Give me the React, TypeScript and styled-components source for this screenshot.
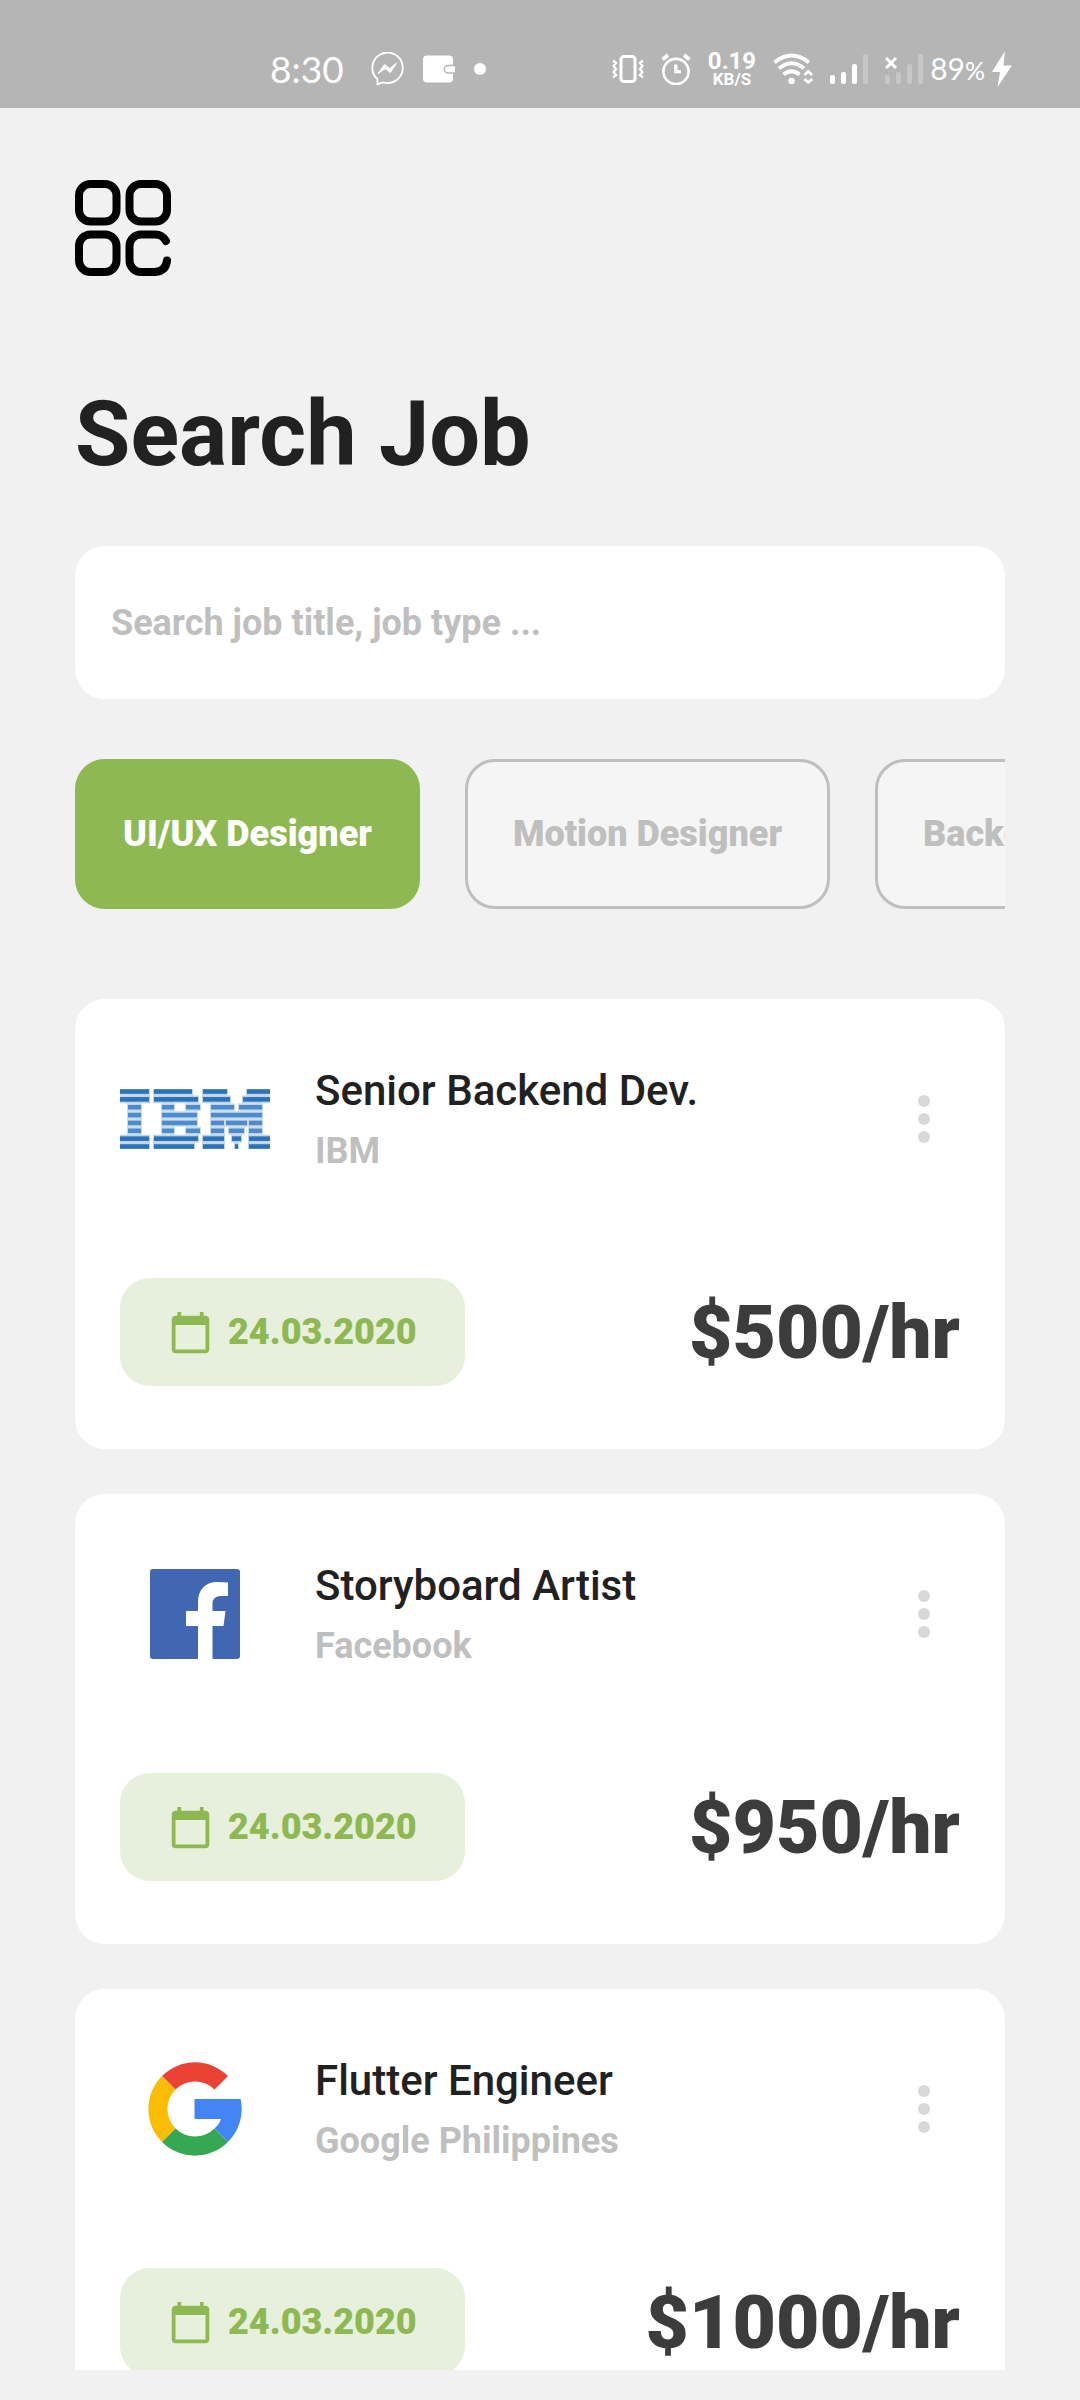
import React, { useState } from "react";
import styled, { createGlobalStyle } from "styled-components";

const color = {
  page: "#f1f1f1",
  bar: "#b5b5b5",
  surface: "#ffffff",
  ink: "#212121",
  price: "#3c3c3c",
  muted: "#bfbfbf",
  dots: "#d8d8d8",
  green: "#8eb952",
  greenSoft: "#e7f0dc",
  chip: "#f5f5f5",
};

const GlobalStyle = createGlobalStyle`
  *, *::before, *::after { box-sizing: border-box; }
  body {
    margin: 0;
    background: ${color.page};
    color: ${color.ink};
    font-family: Roboto, "Liberation Sans", sans-serif;
  }
  button, input { font-family: inherit; }
`;

const Screen = styled.div`
  display: flex;
  flex-direction: column;
  height: 100vh;
  padding-bottom: 30px;
`;

const StatusBar = styled.div`
  flex: none;
  display: flex;
  justify-content: space-between;
  align-items: center;
  padding: 30px 68px 0 270px;
  height: 108px;
  background: ${color.bar};
  color: #ffffff;
  white-space: nowrap;
`;

const StatusGroup = styled.div<{ $gap: number }>`
  display: flex;
  align-items: center;
  gap: ${(p) => p.$gap}px;

  svg { display: block; flex: none; }
`;

const Clock = styled.span`
  margin-right: 8px;
  font: 400 37px/40px Lato, sans-serif;
`;

const NetSpeed = styled.div`
  display: flex;
  flex-direction: column;
  align-items: center;
  font-weight: 700;
`;

const NetValue = styled.span`
  font-size: 24px;
  line-height: 20px;
`;

const NetUnit = styled.span`
  font-size: 17px;
  line-height: 17px;
`;

const Battery = styled.span`
  font: 400 30px/34px Lato, sans-serif;

  small { font-size: 25px; }
`;

const Main = styled.main`
  flex: 1;
  min-height: 0;
  display: flex;
  flex-direction: column;
  padding: 72px 75px 0;
`;

const MenuButton = styled.button`
  flex: none;
  align-self: flex-start;
  padding: 0;
  border: 0;
  background: none;
  cursor: pointer;

  svg { display: block; }
`;

const Title = styled.h1`
  flex: none;
  margin: 106px 0 58px;
  font-size: 90px;
  line-height: 106px;
  font-weight: 700;
`;

const SearchInput = styled.input`
  flex: none;
  width: 100%;
  height: 153px;
  padding: 0 36px;
  border: 0;
  border-radius: 30px;
  outline: none;
  background: ${color.surface};
  color: ${color.ink};
  font-size: 36px;
  font-weight: 700;

  &::placeholder { color: ${color.muted}; opacity: 1; }
`;

const Chips = styled.div`
  flex: none;
  display: flex;
  gap: 45px;
  margin: 60px 0 90px;
  overflow-x: auto;
  scrollbar-width: none;
`;

const Chip = styled.button<{ $active: boolean }>`
  flex: none;
  height: 150px;
  padding: 0 45px;
  border: 3px solid ${(p) => (p.$active ? color.green : color.muted)};
  border-radius: 30px;
  background: ${(p) => (p.$active ? color.green : color.chip)};
  color: ${(p) => (p.$active ? "#ffffff" : color.muted)};
  font-size: 36px;
  font-weight: 900;
  cursor: pointer;
`;

const JobList = styled.ul`
  flex: 1;
  min-height: 0;
  display: flex;
  flex-direction: column;
  gap: 45px;
  margin: 0;
  padding: 0;
  list-style: none;
  overflow-y: auto;
  scrollbar-width: none;
`;

const Card = styled.li`
  flex: none;
  display: flex;
  flex-direction: column;
  gap: 84px;
  padding: 45px 45px 63px;
  border-radius: 30px;
  background: ${color.surface};
`;

const CardHead = styled.div`
  display: flex;
  align-items: center;
  gap: 45px;
`;

const LogoBox = styled.div`
  flex: none;
  display: flex;
  align-items: center;
  justify-content: center;
  width: 150px;
  height: 150px;
`;

const JobText = styled.div`
  flex: 1;
  display: flex;
  flex-direction: column;
  gap: 14px;
`;

const JobTitle = styled.h2`
  margin: 0;
  font-size: 42px;
  line-height: 50px;
  font-weight: 500;
`;

const Company = styled.span`
  color: ${color.muted};
  font-size: 36px;
  line-height: 42px;
  font-weight: 700;
`;

const MoreButton = styled.button`
  flex: none;
  display: flex;
  flex-direction: column;
  align-items: center;
  justify-content: center;
  gap: 6px;
  width: 72px;
  height: 72px;
  padding: 0;
  border: 0;
  background: none;
  cursor: pointer;
`;

const Dot = styled.span`
  width: 12px;
  height: 12px;
  border-radius: 50%;
  background: ${color.dots};
`;

const CardFoot = styled.div`
  display: flex;
  align-items: center;
  justify-content: space-between;
`;

const DateTag = styled.div`
  display: flex;
  align-items: center;
  gap: 15px;
  height: 108px;
  padding: 0 48px;
  border-radius: 30px;
  background: ${color.greenSoft};
  color: ${color.green};
  font-size: 36px;
  font-weight: 900;

  svg { display: block; }
`;

const Price = styled.span`
  color: ${color.price};
  font-size: 75px;
  line-height: 88px;
  font-weight: 900;
`;

const MessengerIcon = () => (
  <svg width="33" height="34" viewBox="0 0 33 34" fill="none" aria-hidden="true">
    <path d="M6.500 32.500V27.200A15.200 15.200 0 1 1 12 30.300Q9.800 30.600 6.500 32.500Z" stroke="#fff" strokeWidth="1.800" strokeLinejoin="round" />
    <path d="M7 21.500 13.600 12.500 18.500 16.500 25.500 11.300 19.300 20.500 14.300 16.700Z" fill="#fff" stroke="#fff" strokeWidth="1" strokeLinejoin="round" />
  </svg>
);

const WalletIcon = () => (
  <svg width="32" height="28" viewBox="0 0 32 28" aria-hidden="true">
    <rect width="30" height="27" y="0.500" rx="4" fill="#fff" />
    <path d="M32 10.500H25a3.700 3.700 0 0 0 0 7.400h7" fill="#fff" stroke="#b5b5b5" strokeWidth="1.500" />
  </svg>
);

const DotIcon = () => (
  <svg width="12" height="12" viewBox="0 0 12 12" aria-hidden="true">
    <circle cx="6" cy="6" r="6" fill="#fff" />
  </svg>
);

const VibrateIcon = () => (
  <svg width="32" height="28" viewBox="0 0 32 28" fill="none" stroke="#fff" aria-hidden="true">
    <rect x="9" y="1.500" width="14" height="25" rx="3" strokeWidth="3" />
    <path d="M1 5.500 4 8 1.500 11 4 14 1.500 17 4 20 1 22.500M31 5.500 28 8 30.500 11 28 14 30.500 17 28 20 31 22.500" strokeWidth="2.400" />
  </svg>
);

const AlarmIcon = () => (
  <svg width="30" height="32" viewBox="0 0 30 32" fill="none" stroke="#fff" aria-hidden="true">
    <circle cx="15" cy="18.500" r="12.600" strokeWidth="2.600" />
    <path d="M14.800 11.500V18.700H20" strokeWidth="3.200" />
    <path d="M1.500 6.500 7 2M28.500 6.500 23 2" strokeWidth="3.600" />
  </svg>
);

const WifiIcon = () => (
  <svg width="40" height="32" viewBox="0 0 40 32" fill="none" stroke="#fff" aria-hidden="true">
    <path d="M1.500 9.500Q18.500-4.500 36 9.500" strokeWidth="3.800" />
    <path d="M6 15.500Q18.500 5 31 15.500" strokeWidth="3.800" />
    <path d="M10.500 21.500Q18.500 15 26.500 21.500" strokeWidth="3.800" />
    <circle cx="18.500" cy="28" r="3.200" fill="#fff" stroke="none" />
    <path d="M31.500 22 35.300 18.300 39 22M31.500 26 35.300 29.500 39 26" strokeWidth="2.600" />
  </svg>
);

const SignalIcon = ({ level, absent }: { level: number; absent?: boolean }) => (
  <svg width="38" height="32" viewBox="0 0 38 32" aria-hidden="true">
    {[9, 12, 20, 30].map((h, i) => (
      <rect key={h} x={i * 11} y={31 - h} width="5" height={h} rx="2" fill="#fff" opacity={i < level ? 1 : 0.25} />
    ))}
    {absent && <path d="M1 5 11 15M11 5 1 15" stroke="#fff" strokeWidth="3" />}
  </svg>
);

const BoltIcon = () => (
  <svg width="20" height="36" viewBox="0 0 20 36" aria-hidden="true">
    <path d="M13 0 0 21h8L5.500 36 20 14.500h-8.500Z" fill="#fff" />
  </svg>
);

const MenuIcon = () => (
  <svg width="96" height="96" viewBox="0 0 96 96" fill="none" stroke="#000" strokeWidth="8" strokeLinecap="round" aria-hidden="true">
    <rect x="4" y="4" width="37.500" height="37.500" rx="11.500" />
    <rect x="54.500" y="4" width="37.500" height="37.500" rx="11.500" />
    <rect x="4" y="54.500" width="37.500" height="37.500" rx="11.500" />
    <path d="M91 61Q87.500 54.500 80 54.500H66A11.500 11.500 0 0 0 54.500 66V80.500A11.500 11.500 0 0 0 66 92H80Q91 91 92 80.500" />
  </svg>
);

const CalendarIcon = () => (
  <svg width="45" height="45" viewBox="0 0 24 24" fill="currentColor" aria-hidden="true">
    <path d="M20 3h-1V1h-2v2H7V1H5v2H4c-1.100 0-2 .9-2 2v16c0 1.100.9 2 2 2h16c1.100 0 2-.9 2-2V5c0-1.100-.9-2-2-2zm0 18H4V8h16v13z" />
  </svg>
);

// Each entry is one stripe, as [start, end] spans across the mark.
const ibmStripes: number[][][] = [
  [[0, 29], [34, 72], [83, 107], [127, 150]],
  [[0, 29], [34, 78], [83, 110], [123, 150]],
  [[8, 21], [42, 54], [66, 80], [91, 114], [119, 142]],
  [[8, 21], [42, 77], [91, 142]],
  [[8, 21], [42, 77], [91, 104], [106, 127], [129, 142]],
  [[8, 21], [42, 54], [66, 80], [91, 104], [109, 124], [129, 142]],
  [[0, 29], [34, 78], [83, 104], [112, 121], [129, 150]],
  [[0, 29], [34, 74], [83, 104], [115, 118], [129, 150]],
];

const IbmLogo = () => (
  <svg width="150" height="60" viewBox="0 0 150 60" role="img" aria-label="IBM logo">
    {ibmStripes.map((spans, row) => {
      const y = row * 7.86;
      const fill = row < 2 || row > 5 ? "#2c72b8" : "#4d8bca";
      return spans.map(([from, to]) => (
        <g key={`${row}-${from}`} fill={fill}>
          <rect x={from - 1} y={y - 1.4} width={to - from + 2} height="7.800" opacity="0.3" />
          <rect x={from} y={y + 0.2} width={to - from} height="4.600" />
        </g>
      ));
    })}
  </svg>
);

const FacebookLogo = () => (
  <svg width="90" height="90" viewBox="0 0 90 90" role="img" aria-label="Facebook logo">
    <rect width="90" height="90" rx="3" fill="#4267b2" />
    <path d="M48 90V57H36V42H48V33C48 20 56 13 67 13q6 0 11 .6V27H71q-8.500 0-8.500 8v7H75.500L73.500 57H62.500V90Z" fill="#fff" />
  </svg>
);

const GoogleLogo = () => (
  <svg width="94" height="94" viewBox="0 0 94 94" role="img" aria-label="Google logo">
    <path d="M14 14A46.700 46.700 0 0 1 80 14L66.500 27.500A27.600 27.600 0 0 0 27.500 27.500Z" fill="#ea4335" />
    <path d="M14 14A46.700 46.700 0 0 0 14 80L27.500 66.500A27.600 27.600 0 0 1 27.500 27.500Z" fill="#fbbc05" />
    <path d="M14 80A46.700 46.700 0 0 0 80 80L66.500 66.500A27.600 27.600 0 0 1 27.500 66.500Z" fill="#34a853" />
    <path d="M46.500 37H92.600A46.700 46.700 0 0 1 80 80L66.500 66.500Q71.500 62 73 57H46.500Z" fill="#4285f4" />
  </svg>
);

const categories = ["UI/UX Designer", "Motion Designer", "Backend Developer"];

const jobs = [
  { title: "Senior Backend Dev.", company: "IBM", date: "24.03.2020", rate: "$500/hr", Logo: IbmLogo },
  { title: "Storyboard Artist", company: "Facebook", date: "24.03.2020", rate: "$950/hr", Logo: FacebookLogo },
  { title: "Flutter Engineer", company: "Google Philippines", date: "24.03.2020", rate: "$1000/hr", Logo: GoogleLogo },
];

export default function App() {
  const [active, setActive] = useState(categories[0]);
  const [query, setQuery] = useState("");

  return (
    <Screen>
      <GlobalStyle />
      <StatusBar>
        <StatusGroup $gap={19}>
          <Clock>8:30</Clock>
          <MessengerIcon />
          <WalletIcon />
          <DotIcon />
        </StatusGroup>
        <StatusGroup $gap={17}>
          <VibrateIcon />
          <AlarmIcon />
          <NetSpeed>
            <NetValue>0.19</NetValue>
            <NetUnit>KB/S</NetUnit>
          </NetSpeed>
          <WifiIcon />
          <SignalIcon level={3} />
          <StatusGroup $gap={7}>
            <SignalIcon level={0} absent />
            <Battery>
              89<small>%</small>
            </Battery>
            <BoltIcon />
          </StatusGroup>
        </StatusGroup>
      </StatusBar>
      <Main>
        <MenuButton type="button" aria-label="Menu">
          <MenuIcon />
        </MenuButton>
        <Title>Search Job</Title>
        <SearchInput
          type="text"
          aria-label="Search jobs"
          placeholder="Search job title, job type ..."
          value={query}
          onChange={(e) => setQuery(e.target.value)}
        />
        <Chips>
          {categories.map((name) => (
            <Chip key={name} type="button" $active={name === active} aria-pressed={name === active} onClick={() => setActive(name)}>
              {name}
            </Chip>
          ))}
        </Chips>
        <JobList>
          {jobs.map(({ title, company, date, rate, Logo }) => (
            <Card key={title}>
              <CardHead>
                <LogoBox>
                  <Logo />
                </LogoBox>
                <JobText>
                  <JobTitle>{title}</JobTitle>
                  <Company>{company}</Company>
                </JobText>
                <MoreButton type="button" aria-label={`More options for ${title}`}>
                  <Dot />
                  <Dot />
                  <Dot />
                </MoreButton>
              </CardHead>
              <CardFoot>
                <DateTag>
                  <CalendarIcon />
                  <time dateTime="2020-03-24">{date}</time>
                </DateTag>
                <Price>{rate}</Price>
              </CardFoot>
            </Card>
          ))}
        </JobList>
      </Main>
    </Screen>
  );
}
